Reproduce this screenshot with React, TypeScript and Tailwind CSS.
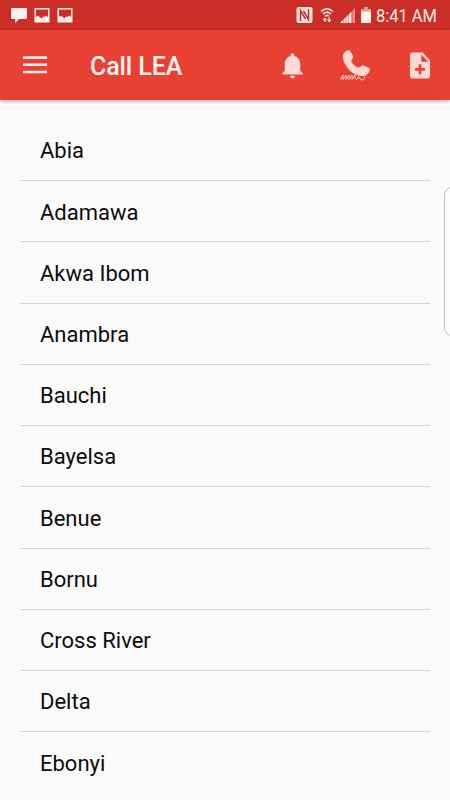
const states = [
    "Abia",
    "Adamawa",
    "Akwa Ibom",
    "Anambra",
    "Bauchi",
    "Bayelsa",
    "Benue",
    "Bornu",
    "Cross River",
    "Delta",
    "Ebonyi",
];

const PictureIcon = () => (
    <svg width="16" height="16" viewBox="0 0 16 16" fill="#fff0ee">
        <path
            fillRule="evenodd"
            d="M1 1h14q.5 0 .5.5V15q0 .5-.5.5H1q-.5 0-.5-.5V1.500Q.5 1 1 1zM2 2.500V10l2-1.300L5.500 10l2 1.500 1.500-2 1.500.5L12 8.500l2 1.500V2.500z"
        />
    </svg>
);

const StatusBar = () => (
    <div className="flex h-[30px] items-center justify-between bg-[#cb2e26] pl-[11px] pr-[13px]">
        <div className="flex items-center">
            <svg width="16" height="16" viewBox="0 0 16 16" fill="#fff0ee">
                <path d="M1 1h14q1 0 1 1v9q0 1-1 1H8l-3.800 4v-4H1q-1 0-1-1V2q0-1 1-1z" />
            </svg>
            <div className="ml-[7px] flex gap-[7px]">
                <PictureIcon />
                <PictureIcon />
            </div>
        </div>
        <div className="flex items-center">
            <svg width="17" height="16" viewBox="0 0 16 16">
                <path d="M2 0h12q2 0 2 2v12q0 2-2 2H2q-2 0-2-2V2q0-2 2-2z" fill="#fbe3e1" />
                <path d="M4 14V3.500l5 8.500M12 2v10.500L7 4" fill="none" stroke="#b9342d" strokeWidth="1.500" />
            </svg>
            <svg className="ml-[7px]" width="14" height="16" viewBox="0 0 14 16" fill="none" stroke="#fbe3e1">
                <path d="M1 4.500Q7-1 13 4.500M3 7Q7 3.300 11 7M5 9.200q2-1.700 4 0" strokeWidth="1.500" />
                <path d="M4.800 15v-4M9.200 10.500v4" strokeWidth="1.500" />
                <path d="M2.500 13l2.300-2.600L7.100 13zM6.900 12.800l2.300 2.700 2.300-2.700z" fill="#fbe3e1" stroke="none" />
            </svg>
            <svg className="ml-[6px]" width="15" height="15" viewBox="0 0 15 15">
                <path d="M0 15l3-3v3zM3.500 11.500l2.200-2.200V15H3.500zM6.300 8.700l2.200-2.200V15H6.300zM9.100 5.900l2.400-2.400V15H9.100z" fill="#fff0ee" />
                <path d="M12.300 2.700L15 0v15h-2.700z" fill="#e58e88" />
            </svg>
            <svg className="ml-[6px]" width="10" height="16" viewBox="0 0 10 16">
                <path d="M3 0h4v2h3v3H0V2h3z" fill="#e49a95" />
                <path d="M0 4.500h10V15q0 1-1 1H1q-1 0-1-1z" fill="#fff4f2" />
            </svg>
            <div className="ml-[5px] w-[61px] pt-[1px]">
                <span className="block origin-left scale-x-[0.915] whitespace-nowrap text-[18px] leading-[28px] text-[#ffefed]">
                    8:41 AM
                </span>
            </div>
        </div>
    </div>
);

const Header = () => (
    <header className="flex h-[70px] items-center bg-[#e94034] shadow-[0_1px_4px_rgba(0,0,0,0.35)]">
        <button type="button" aria-label="Menu" className="ml-[23px]">
            <svg width="24" height="18" viewBox="0 0 24 18" fill="#fff0ee">
                <path d="M0 .3h24v2.600H0zM0 7.500h24v2.600H0zM0 14.700h24v2.600H0z" />
            </svg>
        </button>
        <h1 className="ml-[43px] grow pt-[3px] text-[25px] font-medium leading-[30px] tracking-[-0.1px] text-[#fff4f2]">
            Call LEA
        </h1>
        <div className="mr-[15px] flex items-center">
            <svg width="31" height="31" viewBox="0 0 24 24" fill="#ffd9d5">
                <path d="M12 22c1.100 0 2-.9 2-2h-4c0 1.100.89 2 2 2zm6-6v-5c0-3.070-1.640-5.640-4.500-6.320V4c0-.83-.67-1.500-1.500-1.500s-1.500.67-1.500 1.500v.68C7.630 5.360 6 7.920 6 11v5l-2 2v1h16v-1l-2-2z" />
            </svg>
            <svg className="ml-[32px]" width="32" height="32" viewBox="0 0 32 32">
                <path
                    d="M3 6.500C3.500 3.500 6 1.500 8.500 1.200q1.300-.1 1.900 1l2.800 5c.7 1.600-1.900 3-1.900 4.600 0 2.200 4.700 6.700 7.500 6.700 1.700 0 3-2.600 4.800-2.100l5.400 2.700q1.200.7.900 2C29.200 24 27 26.500 24 27 14 28.300 2 16 3 6.500z"
                    fill="#ffd9d5"
                />
                <path
                    d="M.5 30.500l2.500-4.500v4.500L6 26v4.500L9 26v4.500l3-4.500v4.500l3-4.500c0 2.500-.2 4.500 1.500 4.500s1-3 2.200-3 1 3.500 3.500 3.500c1.500 0 2.300-1.500 2.300-3.500"
                    fill="none"
                    stroke="#ffd0cb"
                    strokeWidth="1"
                />
            </svg>
            <svg className="ml-[33px]" width="30" height="31" viewBox="0 0 24 24" preserveAspectRatio="none" fill="#ffd9d5">
                <path d="M14 2H6c-1.100 0-1.990.9-1.990 2L4 20c0 1.100.89 2 1.990 2H18c1.100 0 2-.9 2-2V8l-6-6zm2 14h-3v3h-2v-3H8v-2h3v-3h2v3h3v2zm-3-7V3.500L18.500 9H13z" />
            </svg>
        </div>
    </header>
);

export default function App() {
    return (
        <div className="relative h-[800px] w-[450px] overflow-hidden bg-[#fafafa] font-[Roboto,sans-serif]">
            <StatusBar />
            <Header />
            <ul className="px-5 pt-[20px]">
                {states.map((state) => (
                    <li
                        key={state}
                        className="flex h-[61.220px] items-center border-b border-[#d6d6d6] pl-5 pt-[1.500px] text-[22px] text-[#0c0c0c] last:border-transparent"
                    >
                        {state}
                    </li>
                ))}
            </ul>
            <div className="absolute left-[444px] top-[187px] h-[149px] w-4 rounded-[8px] border border-[#bdbdbd] bg-[#fcfcfc]" />
        </div>
    );
}
